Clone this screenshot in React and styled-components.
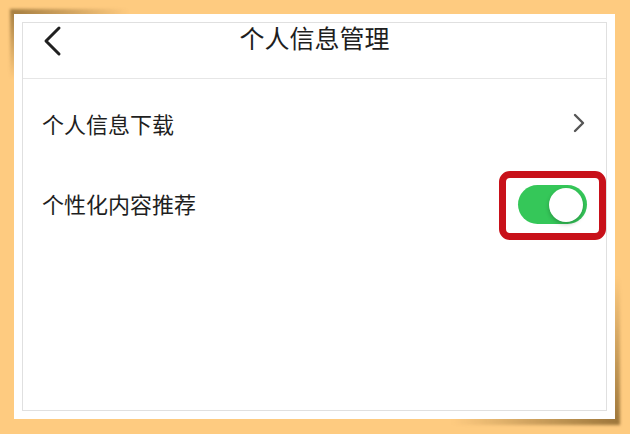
import React from 'react'
import styled, { createGlobalStyle } from 'styled-components'

const GlobalStyle = createGlobalStyle`
  html, body {
    margin: 0;
    padding: 0;
    background: #fecb80;
  }
  body {
    font-family: "Noto Sans CJK SC", "Noto Sans", sans-serif;
  }
`

const Page = styled.div`
  position: relative;
  z-index: 0;
  width: 630px;
  height: 434px;
  padding: 14px 0 0 14px;
  box-sizing: border-box;
  background: #fecb80;
`

// the sheet of paper, shadows curl at two corners
const Sheet = styled.div`
  position: relative;
  width: 601px;
  height: 405px;
  padding: 8px;
  box-sizing: border-box;
  background: #fff;

  &::before {
    content: '';
    position: absolute;
    z-index: -1;
    left: -4px;
    top: -5px;
    width: 120px;
    height: 70px;
    background: radial-gradient(ellipse at 0 0, rgba(90, 60, 10, 0.55), rgba(90, 60, 10, 0) 70%);
    filter: blur(1.5px);
  }

  &::after {
    content: '';
    position: absolute;
    z-index: -1;
    right: -5px;
    bottom: -6px;
    width: 170px;
    height: 150px;
    background: radial-gradient(ellipse at 100% 100%, rgba(90, 60, 10, 0.6), rgba(90, 60, 10, 0) 70%);
    filter: blur(1.5px);
  }
`

const Screen = styled.div`
  height: 100%;
  border: 1px solid #e0e0e0;
  box-sizing: border-box;
  display: flex;
  flex-direction: column;
`

const Header = styled.div`
  position: relative;
  height: 55px;
  flex-shrink: 0;
  display: flex;
  justify-content: center;
  border-bottom: 1px solid #e6e6e6;
`

const Title = styled.h1`
  margin: -3px 0 0;
  font-size: 25px;
  font-weight: 400;
  line-height: 34px;
  color: #1e1e1e;
`

const BackButton = styled.button`
  position: absolute;
  left: 18px;
  top: 1px;
  padding: 0;
  border: none;
  background: none;
  display: flex;
`

const List = styled.div`
  padding-top: 4px;
  display: flex;
  flex-direction: column;
`

const Row = styled.div`
  height: 80px;
  padding: 0 20px 0 19px;
  display: flex;
  align-items: center;
  justify-content: space-between;
`

const Label = styled.span`
  font-size: 22px;
  color: #1f1f1f;
`

const Highlight = styled.div`
  margin-right: -20px;
  margin-top: 4px;
  padding: 7px 12px 9px 12px;
  border: 7px solid #c8111a;
  border-radius: 11px;
  display: flex;
`

const Track = styled.div`
  position: relative;
  width: 69px;
  height: 39px;
  border-radius: 20px;
  background: ${p => (p.on ? '#35c759' : '#e5e5ea')};
`

const Knob = styled.div`
  position: absolute;
  top: 3px;
  left: ${p => (p.on ? '31px' : '3px')};
  width: 34px;
  height: 34px;
  border-radius: 50%;
  background: #fff;
  box-shadow: 0 2px 4px rgba(0, 0, 0, 0.25);
`

const Chevron = ({ dir = 'right' }) =>
  dir === 'left' ? (
    <svg width="22" height="34" viewBox="0 0 22 34">
      <polyline points="18,4 5,17 18,30" fill="none" stroke="#202020" strokeWidth="3" strokeLinecap="round" strokeLinejoin="round" />
    </svg>
  ) : (
    <svg width="14" height="20" viewBox="0 0 14 20">
      <polyline points="3,2 11,10 3,18" fill="none" stroke="#555" strokeWidth="2.4" strokeLinecap="round" strokeLinejoin="round" />
    </svg>
  )

const Switch = ({ on }) => (
  <Track on={on}>
    <Knob on={on} />
  </Track>
)

export default function App() {
  return (
    <Page>
      <GlobalStyle />
      <Sheet>
        <Screen>
          <Header>
            <BackButton>
              <Chevron dir="left" />
            </BackButton>
            <Title>个人信息管理</Title>
          </Header>
          <List>
            <Row>
              <Label>个人信息下载</Label>
              <Chevron />
            </Row>
            <Row>
              <Label>个性化内容推荐</Label>
              <Highlight>
                <Switch on />
              </Highlight>
            </Row>
          </List>
        </Screen>
      </Sheet>
    </Page>
  )
}
